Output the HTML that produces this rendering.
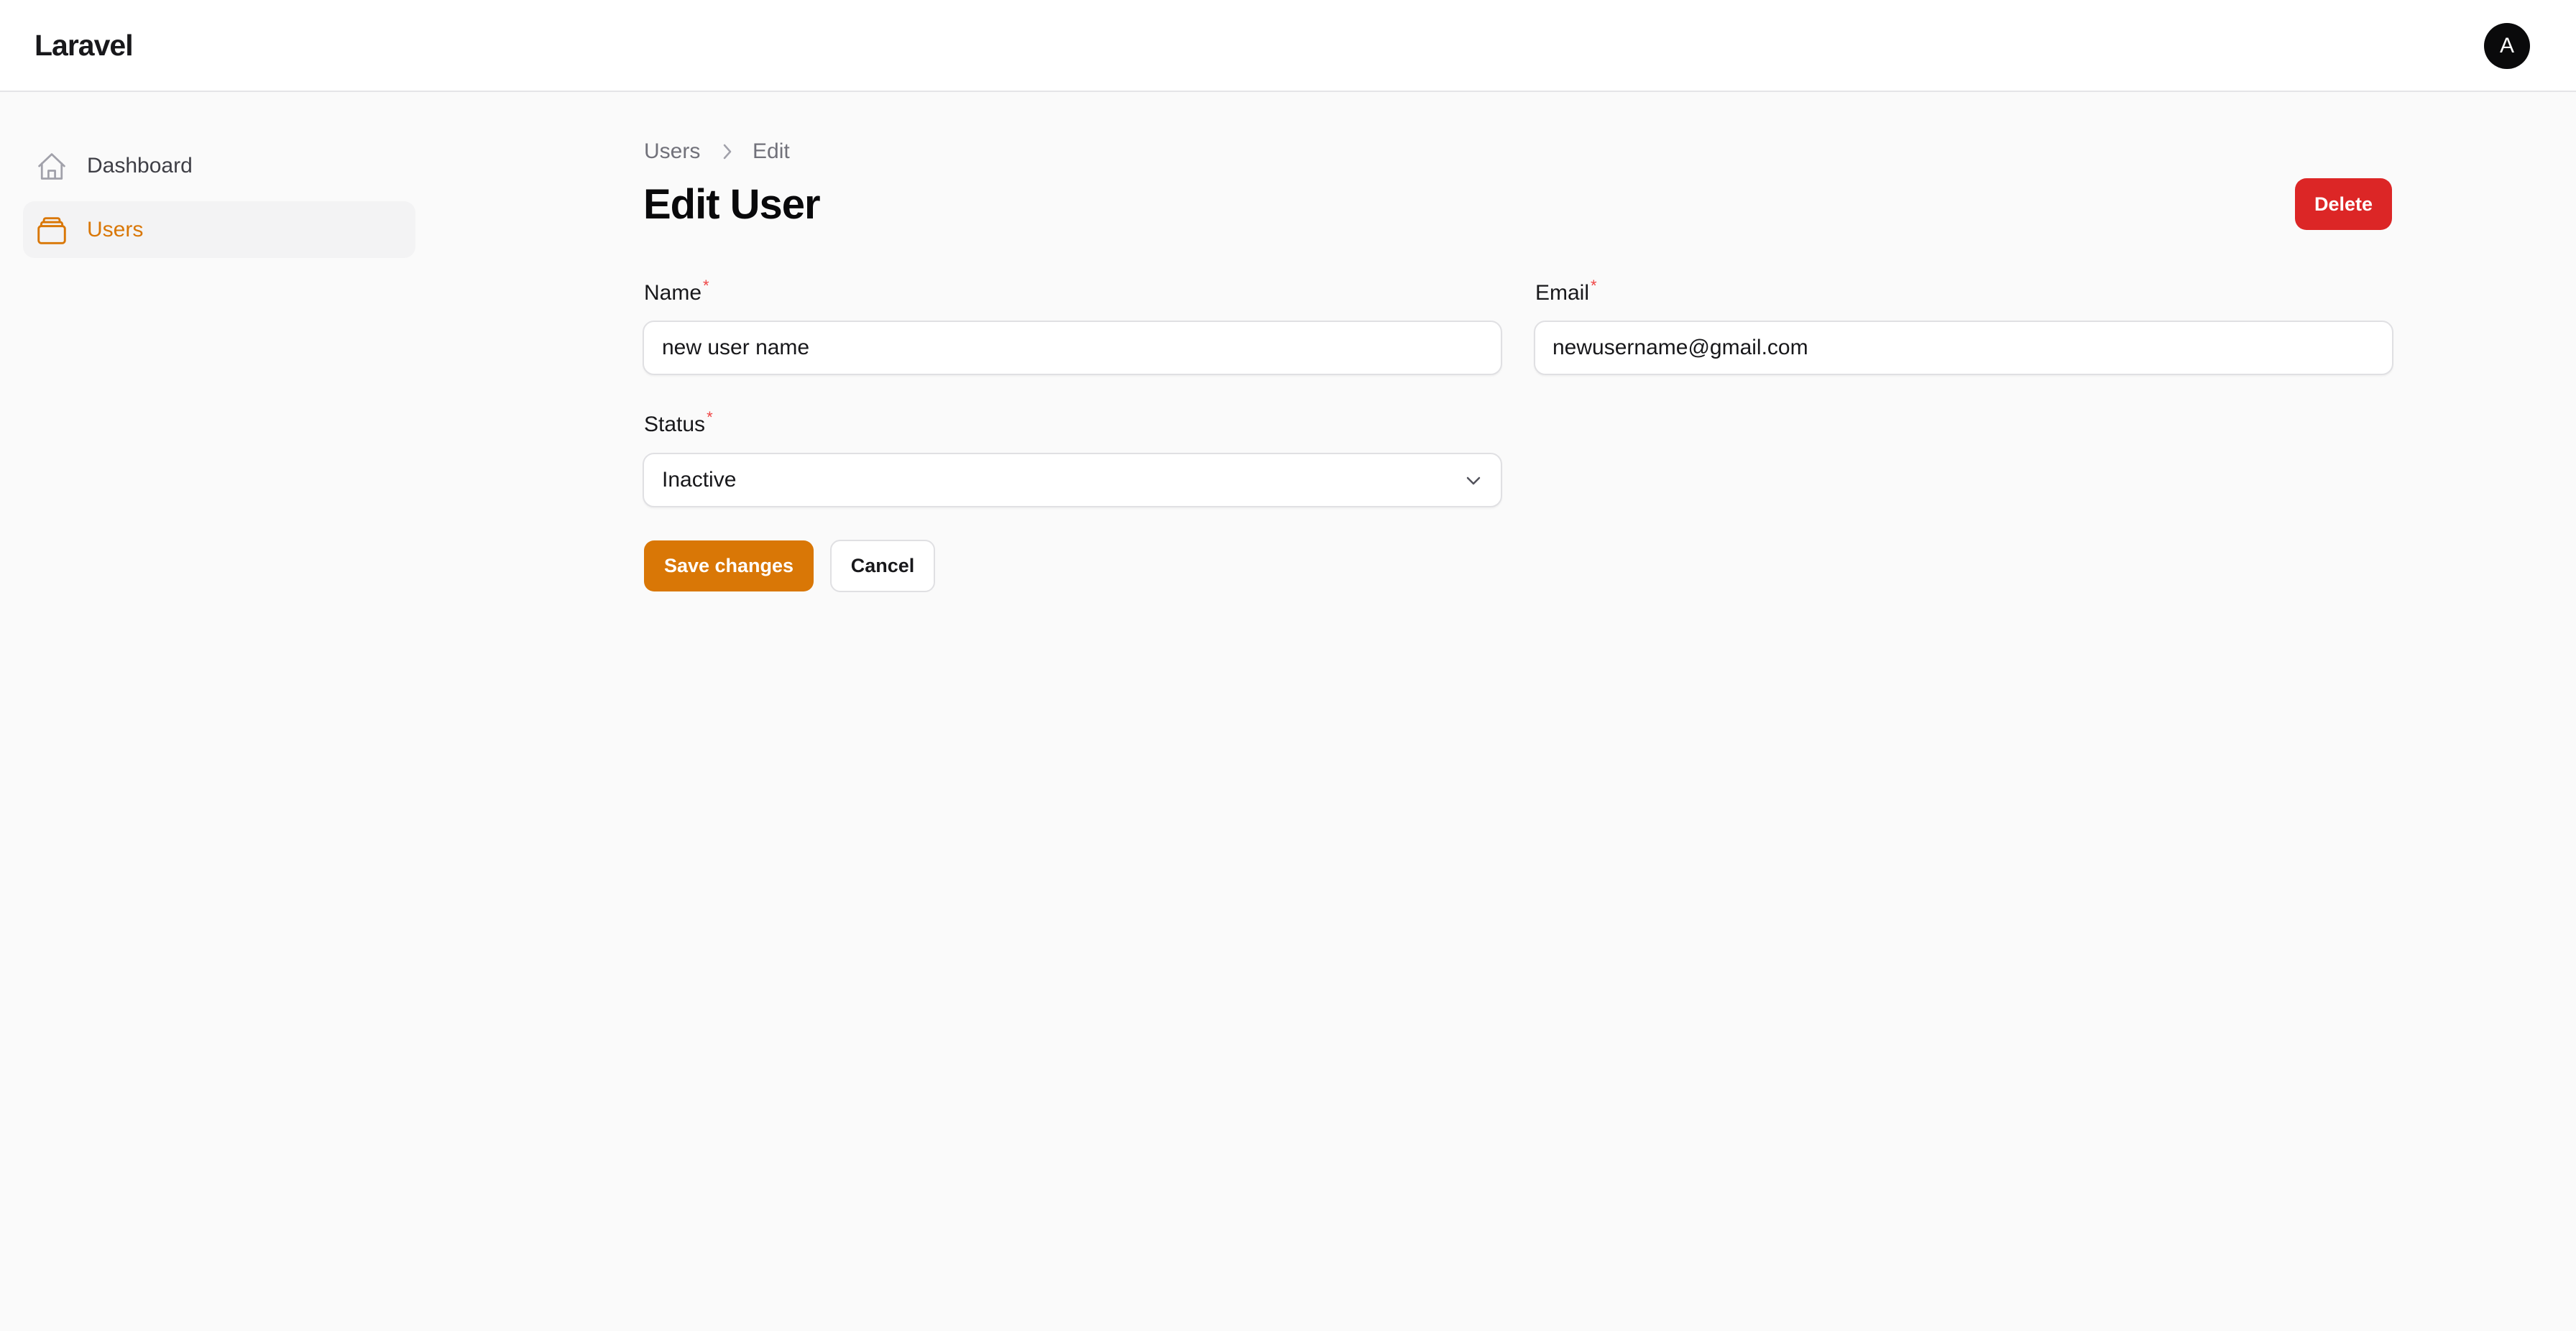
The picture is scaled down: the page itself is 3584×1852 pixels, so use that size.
<!DOCTYPE html>
<html><head><meta charset="utf-8"><style>
*{box-sizing:border-box;margin:0;padding:0}
html,body{width:3584px;height:1852px;overflow:hidden;background:#fafafa;font-family:"Liberation Sans",sans-serif;color:#18181b}
.abs{position:absolute}
.header{left:0;top:0;width:3584px;height:128px;background:#fff;border-bottom:2px solid #e4e4e7}
.t{white-space:nowrap;line-height:1}
.input{background:#fff;border:2px solid #e0e0e3;border-radius:16px;box-shadow:0 2px 2px rgba(0,0,0,.04)}
.lbl{font-size:30px;font-weight:500}
.ast{color:#ef4444;font-size:22px;position:relative;top:-12px;margin-left:2px}
</style></head><body>
<div class="abs header"></div>
<div class="abs t" style="left:48px;top:43px;font-size:41px;font-weight:700;letter-spacing:-1px">Laravel</div>
<div class="abs" style="left:3456px;top:32px;width:64px;height:64px;border-radius:50%;background:#0a0a0b;color:#fff;font-size:30px;font-weight:500;text-align:center;line-height:64px">A</div>

<div class="abs" style="left:32px;top:280px;width:546px;height:79px;background:#f3f3f4;border-radius:16px"></div>
<svg class="abs" style="left:50px;top:210px" width="44" height="44" viewBox="0 0 24 24" fill="none" stroke="#a1a1aa" stroke-width="1.5" stroke-linejoin="round" stroke-linecap="round"><path d="M2.5 11.5 12 2.5l9.5 9M4.5 9.5V21h15V9.5M9.5 21v-6h5v6"/></svg>
<div class="abs t" style="left:121px;top:216px;font-size:30px;color:#3f3f46">Dashboard</div>
<svg class="abs" style="left:50px;top:300px" width="44" height="42" viewBox="0 0 24 23" fill="none" stroke="#d97706" stroke-width="1.6" stroke-linejoin="round"><rect x="2" y="8" width="20" height="13" rx="2"/><path d="M4 8V6.5A1.5 1.5 0 0 1 5.5 5h13A1.5 1.5 0 0 1 20 6.5V8M6 5V3.5A1.5 1.5 0 0 1 7.5 2h9A1.5 1.5 0 0 1 18 3.5V5"/></svg>
<div class="abs t" style="left:121px;top:305px;font-size:30px;color:#d97706">Users</div>

<div class="abs t" style="left:896px;top:196px;font-size:30px;color:#71717a">Users</div>
<svg class="abs" style="left:1000px;top:198px" width="24" height="26" viewBox="0 0 24 26" fill="none" stroke="#a1a1aa" stroke-width="2.5" stroke-linecap="round" stroke-linejoin="round"><path d="M8 4l8 9-8 9"/></svg>
<div class="abs t" style="left:1047px;top:196px;font-size:30px;color:#71717a">Edit</div>
<div class="abs t" style="left:895px;top:256px;font-size:58px;font-weight:700;letter-spacing:-1px;color:#09090b">Edit User</div>
<div class="abs" style="left:3193px;top:248px;width:135px;height:72px;background:#dc2626;border-radius:16px;color:#fff;font-size:27px;font-weight:700;text-align:center;line-height:72px">Delete</div>

<div class="abs t lbl" style="left:896px;top:393px">Name<span class="ast">*</span></div>
<div class="abs input" style="left:894px;top:446px;width:1196px;height:76px"></div>
<div class="abs t" style="left:921px;top:469px;font-size:30px">new user name</div>

<div class="abs t lbl" style="left:2136px;top:393px">Email<span class="ast">*</span></div>
<div class="abs input" style="left:2134px;top:446px;width:1196px;height:76px"></div>
<div class="abs t" style="left:2160px;top:469px;font-size:30px">newusername@gmail.com</div>

<div class="abs t lbl" style="left:896px;top:576px">Status<span class="ast">*</span></div>
<div class="abs input" style="left:894px;top:630px;width:1196px;height:76px"></div>
<div class="abs t" style="left:921px;top:653px;font-size:30px">Inactive</div>
<svg class="abs" style="left:2037px;top:657px" width="26" height="24" viewBox="0 0 26 24" fill="none" stroke="#52525b" stroke-width="2.5" stroke-linecap="round" stroke-linejoin="round"><path d="M5 8l8 8 8-8"/></svg>

<div class="abs" style="left:896px;top:752px;width:236px;height:71px;background:#d97706;border-radius:14px;color:#fff;font-size:27px;font-weight:700;text-align:center;line-height:71px">Save changes</div>
<div class="abs" style="left:1155px;top:751px;width:146px;height:73px;background:#fff;border:2px solid #e0e0e3;border-radius:14px;font-size:27px;font-weight:700;text-align:center;line-height:69px">Cancel</div>
</body></html>
